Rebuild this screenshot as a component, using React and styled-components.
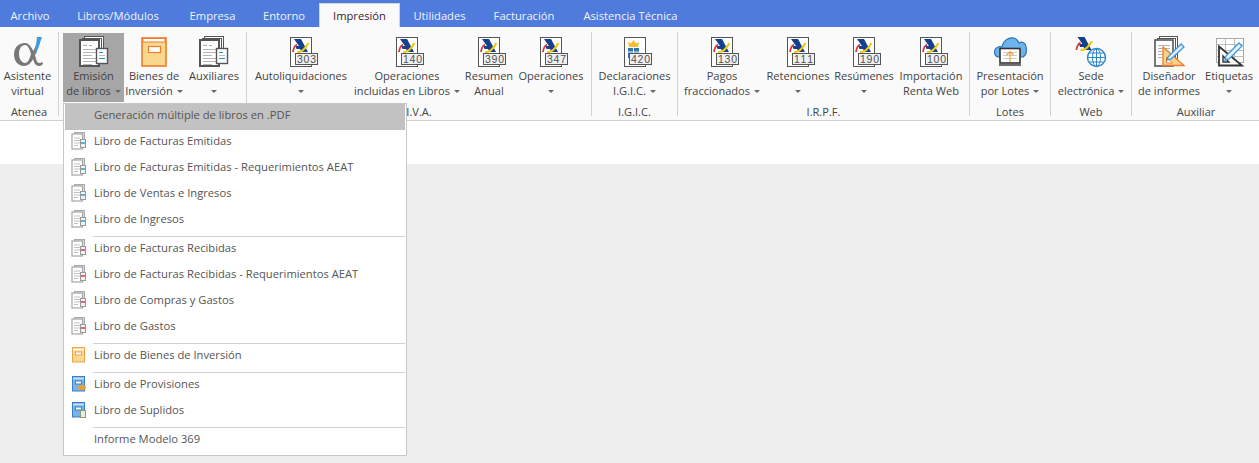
import React from 'react';
import styled, { createGlobalStyle } from 'styled-components';

const Global = createGlobalStyle`
  html, body { margin: 0; padding: 0; height: 100%; overflow: hidden; background: #fff; }
  #root { height: 100%; }
`;
const FONT = `"Open Sans", "Noto Sans", sans-serif`;

const Page = styled.div`
  position: relative; width: 1259px; height: 463px; display: flex; flex-direction: column;
  font-family: ${FONT}; font-size: 11.2px; color: #444; overflow: hidden;
`;
const TabBar = styled.div`
  height: 27px; background: #4e7bdc; display: flex; align-items: flex-end; flex: none;
`;
const Tab = styled.div`
  height: 24px; display: flex; align-items: center; padding: 0 1px;
  box-sizing: border-box; color: ${p => p.$active ? '#3a2030' : '#f0f4fd'};
  width: ${p => p.$w}px; justify-content: center; white-space: nowrap;
  ${p => p.$active ? 'background:#fafafa;border:1px solid #d4d4d4;border-bottom:none;' : ''}
`;
const Ribbon = styled.div`
  height: 94px; flex: none; box-sizing: border-box; background: #fafafa; font-size: 11.05px;
  border-bottom: 1px solid #cfcfcf; padding-top: 5px; display: flex; align-items: flex-start;
`;
const Group = styled.div`
  width: ${p => p.$w}px; height: 84px; box-sizing: border-box; flex: none;
  border-right: ${p => p.$last ? 'none' : '1px solid #d2d2d2'};
  display: flex; flex-direction: column; padding-left: ${p => p.$pl || 0}px;
`;
const Buttons = styled.div` display: flex; height: 70px; margin-top: 1px; flex: none; `;
const GroupLabel = styled.div`
  height: 15px; line-height: 15px; margin-left: ${p => -(p.$pl || 0)}px; text-align: center;
  color: #444; white-space: nowrap; padding-top: 1px;
`;
const Btn = styled.div`
  width: ${p => p.$w}px; height: 69px; flex: none; display: flex; flex-direction: column;
  align-items: center; background: ${p => p.$on ? '#a6a6a6' : 'transparent'};
  white-space: nowrap;
`;
const IconWrap = styled.div` height: 32px; margin-top: 3px; flex: none; display: flex; `;
const BtnLine = styled.div`
  height: 15px; line-height: 15px; display: flex; align-items: center; gap: 4px;
`;
const Caret = styled.span`
  display: inline-block; width: 0; height: 0; margin-top: 2px;
  border-left: 3px solid transparent; border-right: 3px solid transparent; border-top: 3px solid #666;
`;
const Workspace = styled.div` height: 43px; flex: none; background: #fff; `;
const Back = styled.div` flex: 1; background: #eee; `;

const Menu = styled.div`
  position: absolute; left: 63px; top: 103px; width: 344px; height: 353px; box-sizing: border-box;
  background: #fff; border: 1px solid #c8c8c8; padding: 0 1px; color: #555;
`;
const Item = styled.div`
  height: 26px; display: flex; align-items: center; white-space: nowrap; padding-bottom: 6px; box-sizing: border-box;
  background: ${p => p.$on ? '#c2c2c2' : 'transparent'};
`;
const ItemIcon = styled.div` width: 29px; height: 18px; margin-top: 1px; flex: none; display: flex; justify-content: center; padding-right: 1px; box-sizing: border-box; `;
const Sep = styled.div`
  height: 3px; margin-left: 28px; display: flex; align-items: flex-end;
  &::after { content: ''; display: block; width: 100%; height: 1px; background: #cfcfcf; }
`;
const Num = styled.text` font-family: "Liberation Sans", sans-serif; font-size: 10.5px; fill: #505050; `;

const S = '#555';
const Alpha = () => (
  <svg width="36" height="32" viewBox="0 0 36 32">
    <path fillRule="evenodd" fill="#787878" d="M15 7C8 7 4 12 4 18.500S8 30 14 30c4 0 7-3 9-7 1 3 2 7 6 7 2 0 4-1 4-3l-1-1c-1 1-2 1-3 1-2 0-3-4-4-8 2-4 3-8 5-12h-3.500c-1 3-2 6-3 8C21 11 19 7 15 7zM15 9c3 0 5 5 6 9-1 4-3 9-6 9-3 0-6-4-6-9s2-9 6-9z"/>
    <path d="M27 1h5l-6 17h-1z" fill="#3f9be0"/>
  </svg>
);
const Lines = ({ x, y, w, n, step = 3, c = '#b5b5b5' }) => (
  <g stroke={c}>{Array.from({ length: n }, (_, i) => <path key={i} d={`M${x} ${y + i * step + .5}h${i % 3 === 2 ? w - 4 : w}`} />)}</g>
);
const Docs = () => (
  <svg width="36" height="32" viewBox="0 0 36 32">
    <g transform="translate(-3 0)">
      <rect x="11.5" y=".5" width="19" height="25" fill="#fff" stroke={S}/>
      <rect x="9.5" y="2.5" width="19" height="25" fill="#fff" stroke={S}/>
      <rect x="7" y="4" width="19" height="26" fill="#fff" stroke={S} strokeWidth="2"/>
      <path d="M10 9.5h4M16 9.5h3" stroke="#aaa"/>
      <Lines x={10} y={13} w={13} n={6}/>
      <rect x="23.5" y="12.5" width="11" height="15" fill="#fff" stroke={S} strokeWidth="1.4"/>
      <path d="M26 16.5h4" stroke="#1e9bd7"/><path d="M26 19.5h6" stroke="#bbb"/><path d="M26 22.5h6" stroke="#1e9bd7"/>
    </g>
  </svg>
);
const Book = () => (
  <svg width="36" height="32" viewBox="0 0 36 32">
    <rect x="6" y="2" width="24" height="28" fill="#f8d88c" stroke="#ee7d2c" strokeWidth="1.6"/>
    <rect x="7" y="2.5" width="22" height="3.5" fill="#fff" stroke="#ee7d2c"/>
    <rect x="12.5" y="10.5" width="12" height="6" fill="#fff" stroke="#ee7d2c" strokeWidth="1.2"/>
  </svg>
);
const Logo = ({ dx = 0, dy = 0 }) => (
  <g transform={`translate(${dx} ${dy})`}>
    <path d="M11 3h7l7 13h-6.500l-1.500-3h-3.500L12.500 10h3.500z" fill="#13408f"/>
    <path d="M14 8.500c-2 1-3.500 3.500-4 7.500" fill="none" stroke="#d8383a" strokeWidth="1.800"/>
    <path d="M14 16c4.500 1 8-3 11.500-9" fill="none" stroke="#f2c811" strokeWidth="2.200"/>
  </g>
);
const NumBox = ({ n, x = 12 }) => (
  <g>
    <rect x={x + .5} y="17.500" width="22" height="11" fill="#f0f0f0" stroke={S}/>
    <Num x={x + 11.5} y="27" textAnchor="middle" textLength="19">{n}</Num>
  </g>
);
const Aeat = ({ n }) => (
  <svg width="36" height="32" viewBox="0 0 36 32">
    <rect x="7.500" y="1.500" width="21" height="29" fill="#fff" stroke={S}/>
    <Logo/>
    <NumBox n={n}/>
  </svg>
);
const Crest = ({ n }) => (
  <svg width="36" height="32" viewBox="0 0 36 32">
    <rect x="7.500" y="1.500" width="21" height="29" fill="#fff" stroke={S}/>
    <path d="M12 11l-1-5 3 1.500L16.500 4 19 7.500 22 6l-1 5z" fill="#f5be2a"/>
    <rect x="11" y="12" width="11" height="10" fill="#2c74b5"/>
    <path d="M11 16h11M16.500 12v10" stroke="#fff"/>
    <NumBox n={n} x={12}/>
  </svg>
);
const Cloud = () => (
  <svg width="36" height="32" viewBox="0 0 36 32">
    <path d="M6 21c-4-1-5-8 0-10 2-1 3 0 4 0 1-6 6-10 12-9 3 1 4 3 5 5 3-2 7 0 7 4 1 4 0 8-3 10z" fill="#6cb4ea" stroke="#2f74b5" strokeWidth="1.200"/>
    <rect x="8" y="12.500" width="20" height="14.500" fill="#fff" stroke="#333" strokeWidth="1.600"/>
    <path d="M11 16.500h14M11 19.500h14M11 22.500h14" stroke="#ccc"/>
    <path d="M18 26v-10M14.500 19l3.500-3.500 3.500 3.500" fill="none" stroke="#f0a030" strokeWidth="1.200"/>
    <path d="M7 29h22" stroke="#333" strokeWidth="1.400"/>
  </svg>
);
const Sede = () => (
  <svg width="36" height="32" viewBox="0 0 36 32">
    <Logo dx={-6.500} dy={-2}/>
    <circle cx="23.500" cy="21.500" r="9" fill="#fff" stroke="#2d85c9" strokeWidth="1.400"/>
    <ellipse cx="23.500" cy="21.500" rx="4" ry="9" fill="none" stroke="#2d85c9"/>
    <path d="M14.500 21.500h18M23.500 12.500v18M16 17h15M16 26h15" stroke="#2d85c9"/>
  </svg>
);
const Designer = () => (
  <svg width="36" height="32" viewBox="0 0 36 32">
    <rect x="8.500" y=".5" width="18" height="25" fill="#fff" stroke={S}/>
    <rect x="6.500" y="2.500" width="18" height="25" fill="#fff" stroke={S}/>
    <rect x="4" y="4" width="18" height="26" fill="#fff" stroke={S} strokeWidth="1.600"/>
    <Lines x={7} y={9} w={12} n={5}/>
    <path d="M12 11v18.500h21z" fill="#fad38a" stroke="#ec7c2c" strokeWidth="1.300"/>
    <path d="M15.500 21v6h6z" fill="#fff" stroke="#ec7c2c"/>
    <path d="M17 21L30 8l3 3-13 12-4 1z" fill="#dff0fb" stroke="#3c98dc" strokeWidth="1.300"/>
  </svg>
);
const Labels = () => (
  <svg width="36" height="32" viewBox="0 0 36 32">
    <rect x="5.500" y="2.500" width="27" height="24" fill="#fff" stroke="#aaa"/>
    <path d="M5.500 8.500h27M5.500 14.500h27M5.500 20.500h27M14.500 2.500v24M23.500 2.500v24" stroke="#bbb"/>
    <path d="M8 10.500v19h23z" fill="#fff" stroke="#333" strokeWidth="1.800"/>
    <path d="M12 20v6h6z" fill="#fff" stroke="#333" strokeWidth="1.400"/>
    <path d="M15 20L28 7l3 3-13 13-4 1z" fill="#e6f3fc" stroke="#3c98dc" strokeWidth="1.300"/>
  </svg>
);

const MiniDoc = ({ c = '#55b5dd' }) => (
  <svg width="16" height="18" viewBox="0 0 16 18">
    <rect x="3.500" y=".5" width="10" height="14" fill="#ddd" stroke="#aaa"/>
    <rect x="1" y="2" width="10.500" height="15" fill="#fff" stroke="#a5a5a5" strokeWidth="1.200"/>
    <path d="M3 6h6M3 8.500h6M3 11h6M3 13.500h4" stroke="#c0c0c0"/>
    <rect x="9.500" y="7.500" width="5" height="8" fill="#f2f2f2" stroke="#999"/>
    <rect x="10" y="10" width="4" height="2" fill={c}/>
  </svg>
);
const MiniBook = ({ blue, badge }) => (
  <svg width="16" height="18" viewBox="0 0 16 18">
    <rect x="1.500" y="1.500" width="12" height="14.500" fill={blue ? '#79b4e6' : '#f9d98d'} stroke={blue ? '#3a80c4' : '#f0a24f'}/>
    <path d="M2 3.500h11" stroke={blue ? '#cfe3f6' : '#fff'} strokeWidth="1.500"/>
    <rect x="4.500" y="6" width="6" height="3" fill="#fff" stroke={blue ? '#3a80c4' : '#f0a24f'}/>
    {badge === 'o' && <ellipse cx="11" cy="12.500" rx="4" ry="2.500" fill="#f0a030"/>}
    {badge === 'g' && <rect x="9.500" y="9.500" width="5" height="7" fill="#e6eee2" stroke="#8a9a80"/>}
  </svg>
);

const rows = [
  { w: 59, label: 'Atenea', items: [{ w: 55, i: <Alpha/>, l: ['Asistente', 'virtual'] }] },
  { w: 188, pl: 4, label: '', items: [
    { w: 61, on: true, i: <Docs/>, l: ['Emisión', 'de libros'], c: 'in' },
    { w: 60, i: <Book/>, l: ['Bienes de', 'Inversión'], c: 'in' },
    { w: 60, i: <Docs/>, l: ['Auxiliares'], c: 'own' },
  ] },
  { w: 345, pl: 3, label: 'I.V.A.', items: [
    { w: 102, i: <Aeat n="303"/>, l: ['Autoliquidaciones'], c: 'own' },
    { w: 110, i: <Aeat n="140"/>, l: ['Operaciones', 'incluidas en Libros'], c: 'in' },
    { w: 54, i: <Aeat n="390"/>, l: ['Resumen', 'Anual'] },
    { w: 70, i: <Aeat n="347"/>, l: ['Operaciones'], c: 'own' },
  ] },
  { w: 86, label: 'I.G.I.C.', items: [{ w: 85, i: <Crest n="420"/>, l: ['Declaraciones', 'I.G.I.C.'], c: 'in' }] },
  { w: 292, label: 'I.R.P.F.', items: [
    { w: 88, i: <Aeat n="130"/>, l: ['Pagos', 'fraccionados'], c: 'in' },
    { w: 64, i: <Aeat n="111"/>, l: ['Retenciones'], c: 'own' },
    { w: 68, i: <Aeat n="190"/>, l: ['Resúmenes'], c: 'own' },
    { w: 66, i: <Aeat n="100"/>, l: ['Importación', 'Renta Web'] },
  ] },
  { w: 81, label: 'Lotes', items: [{ w: 80, i: <Cloud/>, l: ['Presentación', 'por Lotes'], c: 'in' }] },
  { w: 81, label: 'Web', items: [{ w: 80, i: <Sede/>, l: ['Sede', 'electrónica'], c: 'in' }] },
  { w: 128, pl: 4, last: true, label: 'Auxiliar', items: [
    { w: 66, i: <Designer/>, l: ['Diseñador', 'de informes'] },
    { w: 54, i: <Labels/>, l: ['Etiquetas'], c: 'own' },
  ] },
];

const tabs = [
  ['Archivo', 60], ['Libros/Módulos', 116], ['Empresa', 73], ['Entorno', 70],
  ['Impresión', 81, true], ['Utilidades', 79], ['Facturación', 90], ['Asistencia Técnica', 123],
];

const menu = [
  { t: 'Generación múltiple de libros en .PDF', on: true },
  { t: 'Libro de Facturas Emitidas', i: <MiniDoc/> },
  { t: 'Libro de Facturas Emitidas - Requerimientos AEAT', i: <MiniDoc/> },
  { t: 'Libro de Ventas e Ingresos', i: <MiniDoc/> },
  { t: 'Libro de Ingresos', i: <MiniDoc/> },
  'sep',
  { t: 'Libro de Facturas Recibidas', i: <MiniDoc c="#e8607a"/> },
  { t: 'Libro de Facturas Recibidas - Requerimientos AEAT', i: <MiniDoc c="#e8607a"/> },
  { t: 'Libro de Compras y Gastos', i: <MiniDoc c="#e8607a"/> },
  { t: 'Libro de Gastos', i: <MiniDoc c="#e8607a"/> },
  'sep',
  { t: 'Libro de Bienes de Inversión', i: <MiniBook/> },
  'sep',
  { t: 'Libro de Provisiones', i: <MiniBook blue badge="o"/> },
  { t: 'Libro de Suplidos', i: <MiniBook blue badge="g"/> },
  'sep',
  { t: 'Informe Modelo 369' },
];

export default function App() {
  return (
    <Page>
      <Global/>
      <TabBar>
        {tabs.map(([t, w, a]) => <Tab key={t} $w={w} $active={a}>{t}</Tab>)}
      </TabBar>
      <Ribbon>
        {rows.map((g, gi) => (
          <Group key={gi} $w={g.w} $pl={g.pl} $last={g.last}>
            <Buttons>
              {g.items.map((b, i) => (
                <Btn key={i} $w={b.w} $on={b.on}>
                  <IconWrap>{b.i}</IconWrap>
                  {b.l.map((s, k) => (
                    <BtnLine key={k}>{s}{b.c === 'in' && k === b.l.length - 1 && <Caret/>}</BtnLine>
                  ))}
                  {b.c === 'own' && <BtnLine><Caret/></BtnLine>}
                </Btn>
              ))}
            </Buttons>
            <GroupLabel $pl={g.pl}>{g.label}</GroupLabel>
          </Group>
        ))}
      </Ribbon>
      <Workspace/>
      <Back/>
      <Menu>
        {menu.map((m, i) => m === 'sep' ? <Sep key={i}/> : (
          <Item key={i} $on={m.on}><ItemIcon>{m.i}</ItemIcon>{m.t}</Item>
        ))}
      </Menu>
    </Page>
  );
}
